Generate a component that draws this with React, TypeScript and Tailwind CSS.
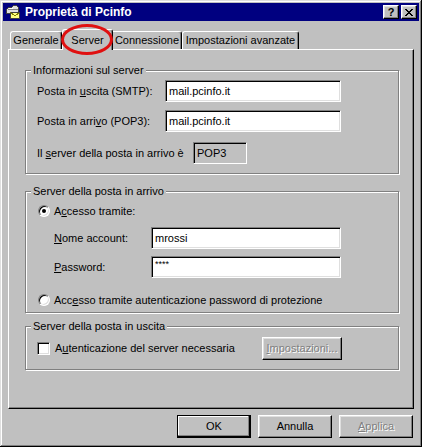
import React from "react";

const sunkenWhite =
  "bg-white border border-t-[#808080] border-l-[#808080] border-b-white border-r-white shadow-[inset_1px_1px_0_#000,inset_-1px_-1px_0_#dfdfdf]";
const raised =
  "border border-t-white border-l-white border-b-black border-r-black shadow-[inset_-1px_-1px_0_#808080,inset_1px_1px_0_#dfdfdf]";
const group =
  "relative w-[374px] border border-[#808080] shadow-[inset_1px_1px_0_#fff,1px_1px_0_#fff] flex flex-col";
const legend =
  "absolute -top-[7px] left-[5px] px-[2px] bg-[#c0c0c0] leading-[13px]";
const disabledText = "text-[#808080] [text-shadow:1px_1px_0_#fff]";

function TitleIcon() {
  return (
    <svg width="16" height="16" viewBox="0 0 16 16" shapeRendering="crispEdges">
      <path d="M1.5 9.5 V5.5 L3.5 3.5 H6.5 L8.5 1.5 H11.5 L13.5 3.5 V9.5 Z" fill="#dfdfdf" stroke="#404040" />
      <path d="M2.5 5.5 H12.5" stroke="#808080" />
      <path d="M3.5 4.5 H7.5" stroke="#fff" />
      <rect x="5.5" y="8.5" width="9" height="6" fill="#ffff80" stroke="#404040" />
      <path d="M5.5 8.5 L10 12 L14.5 8.5" fill="none" stroke="#808000" />
    </svg>
  );
}

function CapBtn({ children }: { children: React.ReactNode }) {
  return (
    <div
      className={`w-[16px] h-[14px] bg-[#c0c0c0] flex items-center justify-center ${raised}`}
    >
      {children}
    </div>
  );
}

function Radio({ checked }: { checked?: boolean }) {
  return (
    <div className="w-[12px] h-[12px] shrink-0 rounded-full bg-white border border-t-[#808080] border-l-[#808080] border-b-white border-r-white shadow-[inset_1px_1px_0_#000,inset_-1px_-1px_0_#dfdfdf] flex items-center justify-center">
      {checked && <div className="w-[4px] h-[4px] rounded-full bg-black" />}
    </div>
  );
}

function Btn({
  children,
  def,
  disabled,
  className = "",
}: {
  children: React.ReactNode;
  def?: boolean;
  disabled?: boolean;
  className?: string;
}) {
  const frame = def
    ? "border border-black shadow-[inset_-1px_-1px_0_#000,inset_-2px_-2px_0_#808080,inset_1px_1px_0_#fff]"
    : raised;
  return (
    <div
      className={`h-[23px] bg-[#c0c0c0] flex items-center justify-center ${frame} ${
        disabled ? disabledText : ""
      } ${className}`}
    >
      {children}
    </div>
  );
}

export default function App() {
  return (
    <div className="relative w-[422px] h-[447px] bg-[#c0c0c0] p-[3px] flex flex-col font-['Liberation_Sans',Arial,sans-serif] text-[11px] leading-none text-black shadow-[inset_-1px_-1px_0_#000,inset_1px_1px_0_#dfdfdf,inset_-2px_-2px_0_#808080,inset_2px_2px_0_#fff]">
      {/* Title bar */}
      <div className="h-[18px] shrink-0 bg-[#000080] flex items-center px-[2px]">
        <TitleIcon />
        <span className="ml-[4px] text-white font-bold text-[12px]">Proprietà di Pcinfo</span>
        <div className="ml-auto flex gap-[2px]">
          <CapBtn>
            <span className="font-bold text-[11px] leading-none">?</span>
          </CapBtn>
          <CapBtn>
            <svg width="8" height="7" viewBox="0 0 8 7" shapeRendering="crispEdges">
              <path d="M0 0h2v1h-2zM6 0h2v1h-2zM1 1h2v1h-2zM5 1h2v1h-2zM2 2h4v1h-4zM3 3h2v1h-2zM2 4h4v1h-4zM1 5h2v1h-2zM5 5h2v1h-2zM0 6h2v1h-2zM6 6h2v1h-2z" fill="#000" />
            </svg>
          </CapBtn>
        </div>
      </div>

      {/* Tabs */}
      <div className="mt-[8px] ml-[7px] h-[20px] flex items-end">
        <div className="w-[52px] h-[18px] flex items-center justify-center border-t border-l border-r border-t-white border-l-white border-r-black rounded-t-[3px] shadow-[inset_-1px_0_0_#808080]">
          Generale
        </div>
        <div className="relative z-10 w-[51px] h-[21px] -mb-[1px] bg-[#c0c0c0] flex items-start pt-[5px] justify-center border-t border-l border-r border-t-white border-l-white border-r-black rounded-t-[3px] shadow-[inset_-1px_0_0_#808080]">
          Server
        </div>
        <div className="w-[69px] h-[18px] flex items-center justify-center border-t border-r border-t-white border-r-black rounded-tr-[3px] shadow-[inset_-1px_0_0_#808080]">
          Connessione
        </div>
        <div className="w-[117px] h-[18px] flex items-center justify-center border-t border-l border-r border-t-white border-l-white border-r-black rounded-t-[3px] shadow-[inset_-1px_0_0_#808080]">
          Impostazioni avanzate
        </div>
      </div>

      {/* Panel */}
      <div className="ml-[5px] w-[406px] h-[360px] flex flex-col pl-[16px] pt-[20px] border border-t-white border-l-white border-b-black border-r-black shadow-[inset_-1px_-1px_0_#808080]">
        {/* Group 1 */}
        <div className={`${group} h-[104px]`}>
          <span className={legend}>Informazioni sul server</span>
          <div className="mt-[9px] pl-[11px] flex items-center">
            <span className="w-[128px]">
              Posta in <span className="underline">u</span>scita (SMTP):
            </span>
            <div className={`${sunkenWhite} w-[176px] h-[22px] flex items-center pl-[3px]`}>mail.pcinfo.it</div>
          </div>
          <div className="mt-[8px] pl-[11px] flex items-center">
            <span className="w-[128px]">
              Posta in arri<span className="underline">v</span>o (POP3):
            </span>
            <div className={`${sunkenWhite} w-[176px] h-[22px] flex items-center pl-[3px]`}>mail.pcinfo.it</div>
          </div>
          <div className="mt-[10px] pl-[11px] flex items-center">
            <span className="w-[156px]">
              Il <span className="underline">s</span>erver della posta in arrivo è
            </span>
            <div className="w-[54px] h-[22px] flex items-center pl-[3px] border border-t-[#808080] border-l-[#808080] border-b-white border-r-white shadow-[inset_1px_1px_0_#000]">
              POP3
            </div>
          </div>
        </div>

        {/* Group 2 */}
        <div className={`${group} h-[122px] mt-[17px]`}>
          <span className={legend}>Server della posta in arrivo</span>
          <div className="mt-[13px] pl-[12px] flex items-center gap-[4px]">
            <Radio checked />
            <span>
              A<span className="underline">c</span>cesso tramite:
            </span>
          </div>
          <div className="mt-[10px] pl-[28px] flex items-center">
            <span className="w-[97px]">
              <span className="underline">N</span>ome account:
            </span>
            <div className={`${sunkenWhite} w-[190px] h-[22px] flex items-center pl-[3px]`}>mrossi</div>
          </div>
          <div className="mt-[7px] pl-[28px] flex items-center">
            <span className="w-[97px]">
              <span className="underline">P</span>assword:
            </span>
            <div className={`${sunkenWhite} w-[190px] h-[22px] flex items-start pt-[3px] pl-[3px] text-[9px]`}>****</div>
          </div>
          <div className="mt-[16px] pl-[12px] flex items-center gap-[4px]">
            <Radio />
            <span>
              Acc<span className="underline">e</span>sso tramite autenticazione password di protezione
            </span>
          </div>
        </div>

        {/* Group 3 */}
        <div className={`${group} h-[44px] mt-[13px]`}>
          <span className={legend}>Server della posta in uscita</span>
          <div className="mt-[10px] pl-[11px] flex items-center">
            <div className={`${sunkenWhite} w-[13px] h-[13px] shrink-0`} />
            <span className="ml-[5px] flex-1">
              A<span className="underline">u</span>tenticazione del server necessaria
            </span>
            <Btn disabled className="w-[80px] h-[22px] mr-[56px]">
              <span>
                <span className="underline">I</span>mpostazioni...
              </span>
            </Btn>
          </div>
        </div>
      </div>

      {/* Bottom buttons */}
      <div className="mt-[6px] mr-[6px] flex justify-end gap-[7px]">
        <Btn def className="w-[74px]">OK</Btn>
        <Btn className="w-[74px]">Annulla</Btn>
        <Btn disabled className="w-[74px]">
          <span>
            <span className="underline">A</span>pplica
          </span>
        </Btn>
      </div>

      {/* Red annotation ellipse */}
      <div className="absolute z-20 left-[61px] top-[24px] w-[52px] h-[31px] rounded-[50%] border-[3px] border-[#e01010]" />
    </div>
  );
}
